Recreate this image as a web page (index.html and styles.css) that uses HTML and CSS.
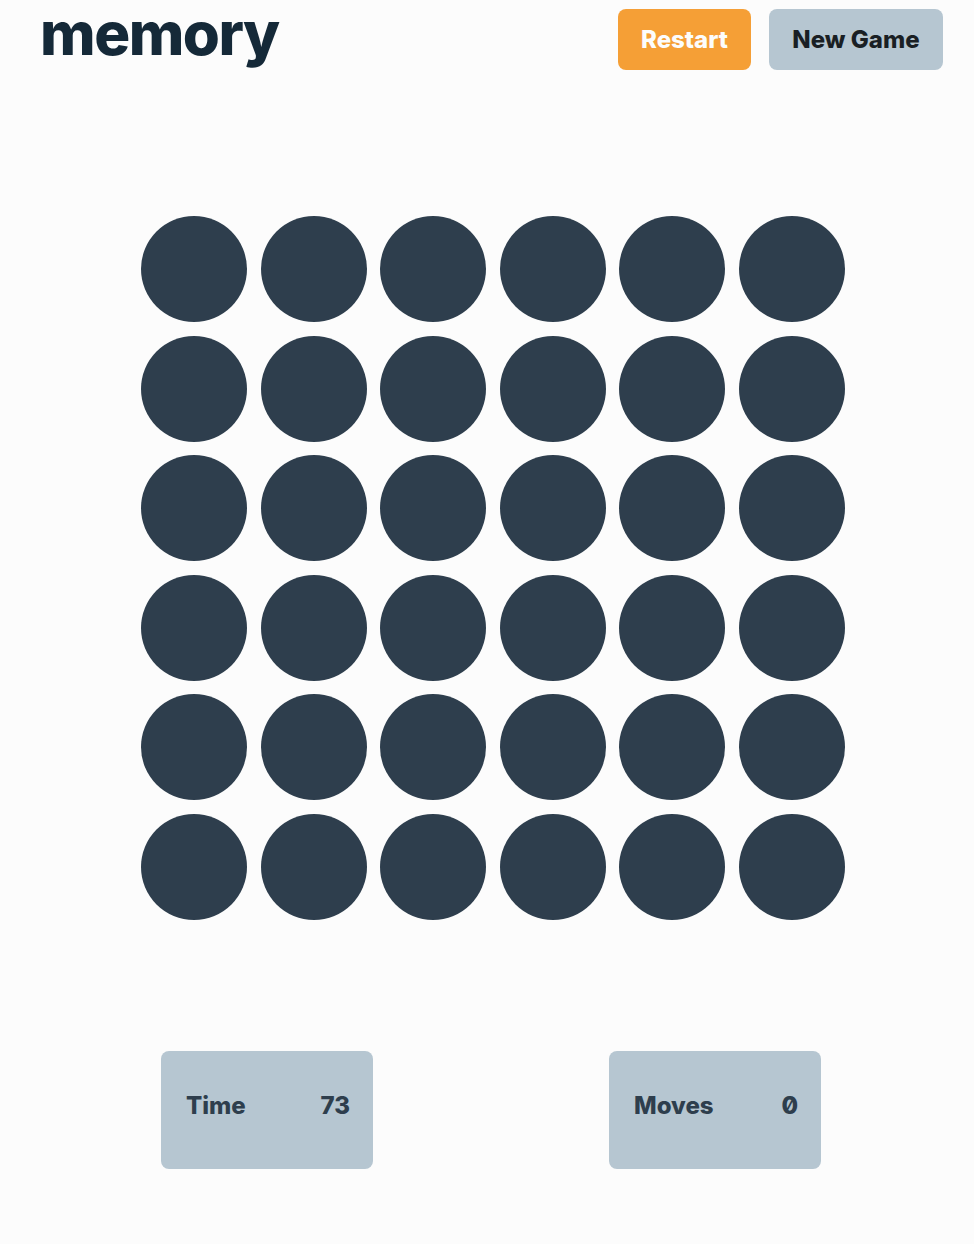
FILE: index.html
```html
<!DOCTYPE html>
<html lang="en">
<head>
    <meta charset="UTF-8">
    <meta name="viewport" content="width=device-width, initial-scale=1.0">
    <title>memory</title>
    <link rel="stylesheet" href="styles.css">
</head>
<body>

    <header class="top-bar">
        <h1 class="logo">memory</h1>
        <div class="actions">
            <button class="btn btn-restart">Restart</button>
            <button class="btn btn-new">New Game</button>
        </div>
    </header>

    <main class="board">
        <div class="grid">
            <div class="dot"></div><div class="dot"></div><div class="dot"></div><div class="dot"></div><div class="dot"></div><div class="dot"></div>
            <div class="dot"></div><div class="dot"></div><div class="dot"></div><div class="dot"></div><div class="dot"></div><div class="dot"></div>
            <div class="dot"></div><div class="dot"></div><div class="dot"></div><div class="dot"></div><div class="dot"></div><div class="dot"></div>
            <div class="dot"></div><div class="dot"></div><div class="dot"></div><div class="dot"></div><div class="dot"></div><div class="dot"></div>
            <div class="dot"></div><div class="dot"></div><div class="dot"></div><div class="dot"></div><div class="dot"></div><div class="dot"></div>
            <div class="dot"></div><div class="dot"></div><div class="dot"></div><div class="dot"></div><div class="dot"></div><div class="dot"></div>
        </div>
    </main>

    <footer class="stats">
        <div class="stat">
            <span class="stat-label">Time</span>
            <span class="stat-value">73</span>
        </div>
        <div class="stat">
            <span class="stat-label">Moves</span>
            <span class="stat-value zero">0</span>
        </div>
    </footer>

</body>
</html>
```

FILE: styles.css
```css
body {
    font-family: 'Inter', 'Noto Sans', sans-serif;
    margin: 0;
    background-color: #fcfcfc;
    color: #152938;
}

.top-bar {
    display: flex;
    justify-content: space-between;
    align-items: flex-start;
    height: 67px;
    padding: 3px 31px 0 40px;
}

.logo {
    margin: 0;
    font-size: 60px;
    font-weight: 800;
    line-height: 60px;
    letter-spacing: -1.5px;
    color: #152938;
}

.actions {
    display: flex;
    gap: 18px;
    margin-top: 6px;
}

.btn {
    font-family: inherit;
    font-size: 24px;
    font-weight: 800;
    height: 61px;
    border: none;
    border-radius: 8px;
    cursor: pointer;
}

.btn-restart {
    width: 133px;
    background-color: #f59f36;
    color: #fcfcfc;
}

.btn-new {
    width: 174px;
    background-color: #b6c6d1;
    color: #1a1f24;
}

.board {
    padding-top: 146px;
}

.grid {
    display: grid;
    grid-template-columns: repeat(6, 106px);
    gap: 13.6px;
    width: 704px;
    margin-left: 141px;
}

.dot {
    width: 106px;
    height: 106px;
    border-radius: 50%;
    background-color: #2e3e4d;
}

.stats {
    display: flex;
    justify-content: space-between;
    width: 660px;
    margin: 131px 0 0 161px;
}

.stat {
    display: flex;
    justify-content: space-between;
    align-items: center;
    box-sizing: border-box;
    width: 212px;
    height: 118px;
    padding: 0 23px 8px 25px;
    background-color: #b6c6d1;
    border-radius: 8px;
    font-size: 24px;
    font-weight: 800;
    color: #2e3e4d;
}

.zero {
    font-feature-settings: "zero" 1;
}
```
